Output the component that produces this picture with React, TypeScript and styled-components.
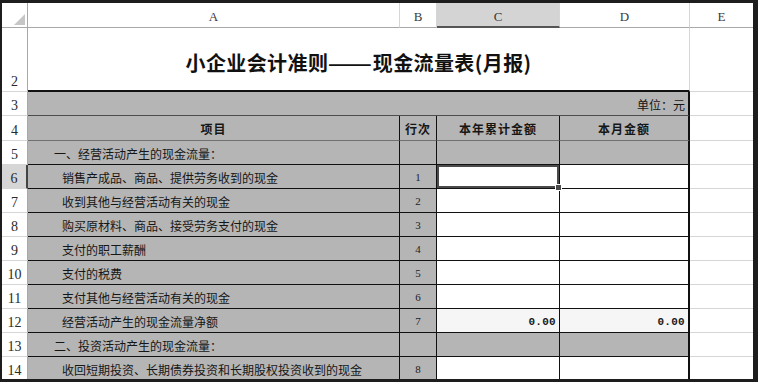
import React from "react";
import styled, { createGlobalStyle, css } from "styled-components";

const CJK = `"Noto Sans CJK SC", "Noto Sans", sans-serif`;
const SERIF = `"Liberation Serif", "DejaVu Serif", serif`;
const GRAY = "#b5b5b5";
const GRID = "#d6d6d6";
const HEAD_LINE = "#a8a8a8";

const GlobalStyle = createGlobalStyle`
  html, body {
    margin: 0;
    padding: 0;
    background: #1d1d1d;
  }
`;

const Frame = styled.div`
  width: 758px;
  height: 382px;
  box-sizing: border-box;
  padding: 3px 5px 3px 2px;
  background: #1d1d1d;
  overflow: hidden;
`;

const Sheet = styled.div`
  display: grid;
  grid-template-columns: 26px 372px 37px 123px 130px 63px;
  grid-template-rows: 25px 64px 24px 25px repeat(10, 24px);
  height: 376px;
  background: #fff;
  overflow: hidden;
  font-family: ${CJK};
  color: #161616;
`;

const Cell = styled.div<{ $right?: string; $bottom?: string; $bg?: string }>`
  box-sizing: border-box;
  display: flex;
  align-items: center;
  min-width: 0;
  overflow: hidden;
  white-space: nowrap;
  background: ${(p) => p.$bg || "#fff"};
  border-right: ${(p) => p.$right || `1px solid ${GRID}`};
  border-bottom: ${(p) => p.$bottom || `1px solid ${GRID}`};
`;

const Corner = styled(Cell)`
  justify-content: flex-end;
  align-items: flex-end;
  padding: 0 2px 2px 0;
  border-right: 1px solid ${HEAD_LINE};
  border-bottom: 1px solid ${HEAD_LINE};
`;

const ColHead = styled(Cell)<{ $selected?: boolean }>`
  justify-content: center;
  align-items: flex-end;
  padding-bottom: 2px;
  font-family: ${SERIF};
  font-size: 13px;
  color: #3a3a3a;
  border-bottom: 1px solid ${HEAD_LINE};
  ${(p) =>
    p.$selected &&
    css`
      background: #d4d4d4;
      border-bottom: 2px solid #555;
      padding-bottom: 1px;
    `}
`;

const RowHead = styled(Cell)<{ $selected?: boolean }>`
  justify-content: center;
  align-items: flex-end;
  padding-bottom: 2px;
  font-family: ${SERIF};
  font-size: 14px;
  line-height: 14px;
  color: #2a2a2a;
  border-right: 1px solid ${HEAD_LINE};
  ${(p) =>
    p.$selected &&
    css`
      background: #d6d6d6;
      border-right: 2px solid #444;
    `}
`;

const Title = styled(Cell)`
  grid-column: span 4;
  justify-content: center;
  padding-top: 6px;
  font-size: 20px;
  font-weight: 700;
  letter-spacing: 0.4px;
  color: #111;
`;

const Dashes = styled.span`
  display: inline-block;
  margin: 0 5px;
  transform: scaleX(1.3);
`;

const Unit = styled(Cell)`
  grid-column: span 4;
  justify-content: flex-end;
  padding: 2px 3px 0 0;
  font-size: 12px;
`;

const HeadCell = styled(Cell)`
  justify-content: center;
  padding-top: 1px;
  font-size: 12px;
  font-weight: 700;
  letter-spacing: 1px;
`;

const Item = styled(Cell)<{ $section?: boolean }>`
  padding: 2px 0 0 ${(p) => (p.$section ? 26 : 34)}px;
  font-size: 12px;
`;

const LineNo = styled(Cell)`
  justify-content: center;
  padding-top: 1px;
  font-family: ${SERIF};
  font-size: 11px;
  color: #222;
`;

const Amount = styled(Cell)<{ $selected?: boolean }>`
  position: relative;
  justify-content: flex-end;
  padding: 2px 3px 0 0;
  font-family: "Liberation Mono", "DejaVu Sans Mono", monospace;
  font-size: 11px;
  font-weight: 700;
  letter-spacing: 0.3px;
  color: #1a1a1a;
  overflow: visible;
  ${(p) =>
    p.$selected &&
    css`
      box-shadow: inset 0 0 0 2px #4a4a4a;
      z-index: 1;
    `}
`;

const FillHandle = styled.span`
  position: absolute;
  right: -3px;
  bottom: -3px;
  width: 5px;
  height: 5px;
  background: #4a4a4a;
  border: 1px solid #fff;
`;

type Row = {
  n: number;
  text: string;
  no?: string;
  section?: boolean;
  tone: "white" | "gray" | "light";
  value?: string;
};

const rows: Row[] = [
  { n: 5, text: "一、经营活动产生的现金流量：", section: true, tone: "gray" },
  { n: 6, text: "销售产成品、商品、提供劳务收到的现金", no: "1", tone: "white" },
  { n: 7, text: "收到其他与经营活动有关的现金", no: "2", tone: "white" },
  { n: 8, text: "购买原材料、商品、接受劳务支付的现金", no: "3", tone: "white" },
  { n: 9, text: "支付的职工薪酬", no: "4", tone: "white" },
  { n: 10, text: "支付的税费", no: "5", tone: "white" },
  { n: 11, text: "支付其他与经营活动有关的现金", no: "6", tone: "white" },
  { n: 12, text: "经营活动产生的现金流量净额", no: "7", tone: "light", value: "0.00" },
  { n: 13, text: "二、投资活动产生的现金流量：", section: true, tone: "gray" },
  { n: 14, text: "收回短期投资、长期债券投资和长期股权投资收到的现金", no: "8", tone: "white" },
];

const toneBg = { white: "#fff", gray: GRAY, light: "#f6f6f6" };
const BLACK = "1px solid #111";
const THICK = "2px solid #111";

export default function App() {
  return (
    <>
      <GlobalStyle />
      <Frame>
        <Sheet>
          <Corner>
            <svg width="11" height="11" viewBox="0 0 11 11">
              <polygon points="11,0 11,11 0,11" fill="#c6c6c6" />
            </svg>
          </Corner>
          <ColHead>A</ColHead>
          <ColHead>B</ColHead>
          <ColHead $selected>C</ColHead>
          <ColHead>D</ColHead>
          <ColHead $right="none">E</ColHead>

          <RowHead>2</RowHead>
          <Title $bottom={THICK}>
            小企业会计准则<Dashes>——</Dashes>现金流量表(月报)
          </Title>
          <Cell $right="none" />

          <RowHead>3</RowHead>
          <Unit $bg={GRAY} $right={THICK} $bottom="1px solid #4d4d4d">
            单位：元
          </Unit>
          <Cell $right="none" />

          <RowHead>4</RowHead>
          <HeadCell $bg={GRAY} $right={BLACK} $bottom="1px solid #707070">
            项目
          </HeadCell>
          <HeadCell $bg={GRAY} $right={BLACK} $bottom="1px solid #707070">
            行次
          </HeadCell>
          <HeadCell $bg={GRAY} $right={BLACK} $bottom="1px solid #707070">
            本年累计金额
          </HeadCell>
          <HeadCell $bg={GRAY} $right={THICK} $bottom="1px solid #707070">
            本月金额
          </HeadCell>
          <Cell $right="none" />

          {rows.map((r) => (
            <React.Fragment key={r.n}>
              <RowHead $selected={r.n === 6}>{r.n}</RowHead>
              <Item $section={r.section} $bg={GRAY} $right={BLACK} $bottom={BLACK}>
                {r.text}
              </Item>
              <LineNo $bg={GRAY} $right={BLACK} $bottom={BLACK}>
                {r.no}
              </LineNo>
              <Amount
                $selected={r.n === 6}
                $bg={toneBg[r.tone]}
                $right={BLACK}
                $bottom={BLACK}
              >
                {r.value}
                {r.n === 6 && <FillHandle />}
              </Amount>
              <Amount $bg={toneBg[r.tone]} $right={THICK} $bottom={BLACK}>
                {r.value}
              </Amount>
              <Cell $right="none" />
            </React.Fragment>
          ))}
        </Sheet>
      </Frame>
    </>
  );
}
